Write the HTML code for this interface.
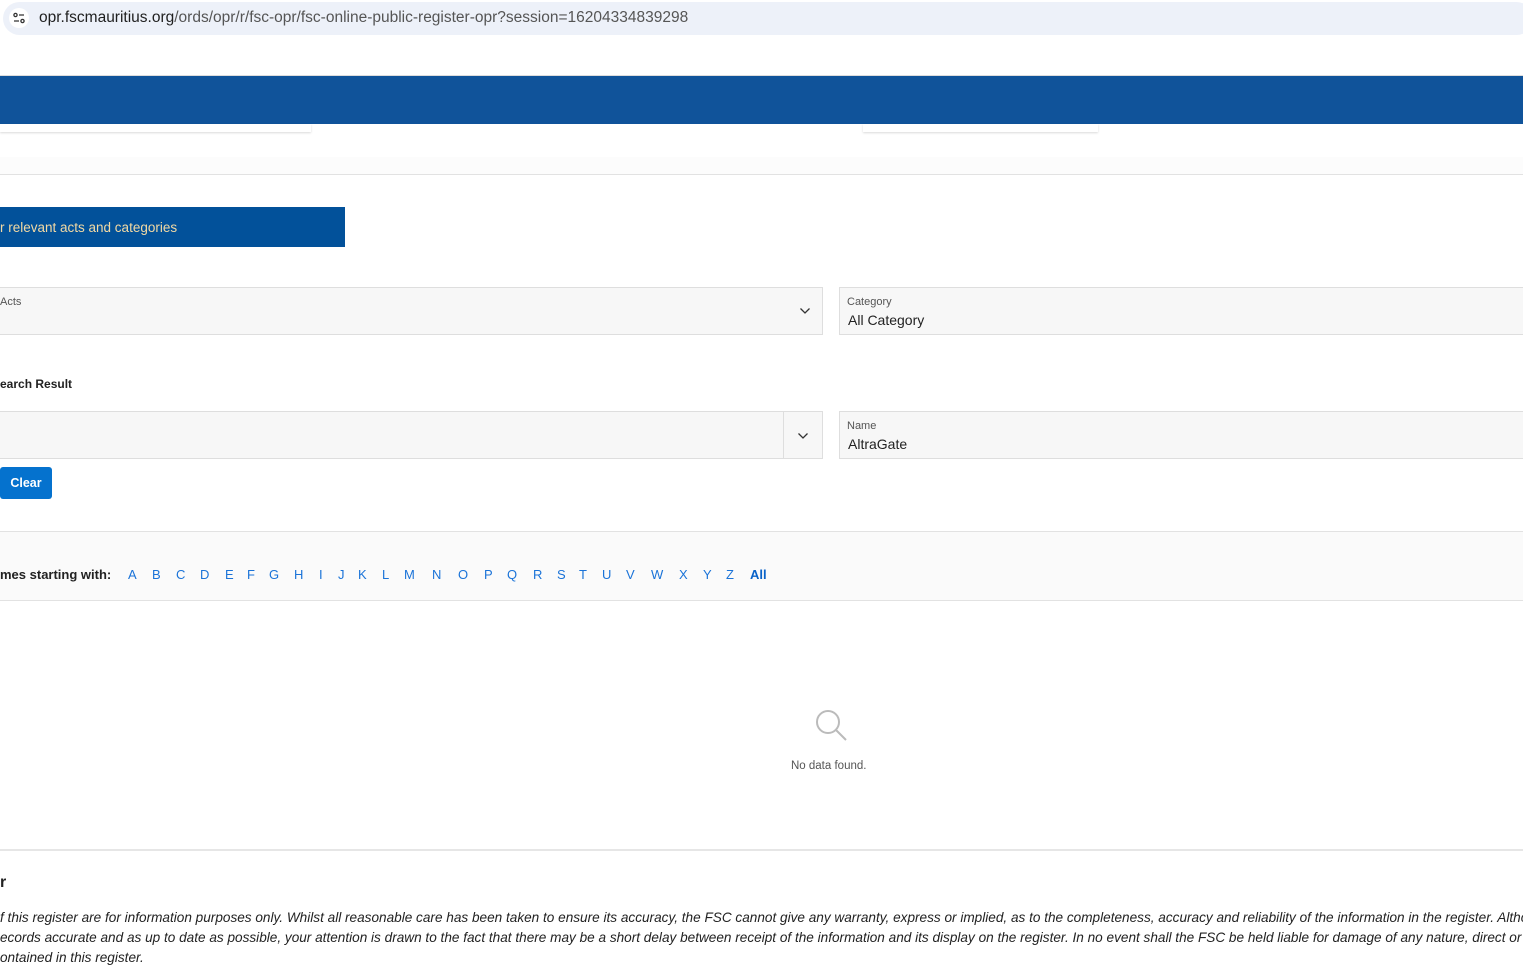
<!DOCTYPE html>
<html><head><style>
*{margin:0;padding:0;box-sizing:border-box}
body{width:1523px;height:970px;overflow:hidden;background:#fff;font-family:"Liberation Sans",sans-serif;position:relative;color:#222}
.a{position:absolute}
.url{left:3px;top:2px;width:1530px;height:33px;background:#edf1f9;border-radius:17px}
.lt{font-size:11px;color:#555}
.field{background:#f7f7f7;border:1px solid #dedede}
.let{font-size:13px;color:#1a73d8;top:567px}
</style></head><body>
<div class="a url"></div>
<div class="a" style="left:9px;top:8px;width:20px;height:20px;border-radius:50%;background:#fff"></div>
<svg class="a" style="left:12px;top:11px" width="14" height="14" viewBox="0 0 14 14" fill="none" stroke="#333" stroke-width="1.3"><circle cx="3.5" cy="4" r="1.6"/><path d="M7 4h5M2 10h5"/><circle cx="10.5" cy="10" r="1.6"/></svg>
<div class="a" style="left:39px;top:9px;font-size:15.5px;color:#1f1f1f">opr.fscmauritius.org<span style="color:#555">/ords/opr/r/fsc-opr/fsc-online-public-register-opr?session=16204334839298</span></div>
<div class="a" style="left:0;top:75px;width:1523px;height:1px;background:#ddd"></div>
<div class="a" style="left:0;top:76px;width:1523px;height:48px;background:#10539a"></div>
<div class="a" style="left:0;top:124px;width:311px;height:8px;background:#fff;box-shadow:0 1px 2px rgba(0,0,0,.15)"></div>
<div class="a" style="left:863px;top:124px;width:235px;height:8px;background:#fff;box-shadow:0 1px 2px rgba(0,0,0,.15)"></div>
<div class="a" style="left:0;top:157px;width:1523px;height:17px;background:#fcfcfc"></div>
<div class="a" style="left:0;top:174px;width:1523px;height:1px;background:#e2e2e2"></div>
<div class="a" style="left:0;top:207px;width:345px;height:40px;background:#02519a"></div>
<div class="a" style="left:0;top:220px;font-size:13.5px;color:#f2d9a4">r relevant acts and categories</div>
<div class="a field" style="left:-2px;top:287px;width:825px;height:48px"></div>
<div class="a lt" style="left:0;top:296px">Acts</div>
<svg class="a" style="left:799px;top:307px" width="12" height="8" viewBox="0 0 12 8" fill="none" stroke="#333" stroke-width="1.3"><path d="M1.5 1.5l4.5 4.5 4.5-4.5"/></svg>
<div class="a field" style="left:839px;top:287px;width:700px;height:48px"></div>
<div class="a lt" style="left:847px;top:296px">Category</div>
<div class="a" style="left:848px;top:312px;font-size:14px">All Category</div>
<div class="a" style="left:0;top:377px;font-size:12px;font-weight:bold">earch Result</div>
<div class="a field" style="left:-2px;top:411px;width:825px;height:48px"></div>
<div class="a" style="left:783px;top:412px;width:1px;height:46px;background:#dedede"></div>
<svg class="a" style="left:797px;top:432px" width="12" height="8" viewBox="0 0 12 8" fill="none" stroke="#333" stroke-width="1.3"><path d="M1.5 1.5l4.5 4.5 4.5-4.5"/></svg>
<div class="a field" style="left:839px;top:411px;width:700px;height:48px"></div>
<div class="a lt" style="left:847px;top:420px">Name</div>
<div class="a" style="left:848px;top:436px;font-size:14px">AltraGate</div>
<div class="a" style="left:0;top:467px;width:52px;height:32px;background:#0572ce;border-radius:3px;color:#fff;font-size:12.5px;font-weight:bold;text-align:center;line-height:33px">Clear</div>
<div class="a" style="left:0;top:531px;width:1523px;height:1px;background:#e2e2e2"></div>
<div class="a" style="left:0;top:532px;width:1523px;height:68px;background:#fafafa"></div>
<div class="a" style="left:0;top:600px;width:1523px;height:1px;background:#e2e2e2"></div>
<div class="a" style="left:0;top:567px;font-size:13px;font-weight:bold">mes starting with:</div>
<div class="a let" style="left:128px">A</div><div class="a let" style="left:152px">B</div><div class="a let" style="left:176px">C</div><div class="a let" style="left:200px">D</div><div class="a let" style="left:225px">E</div><div class="a let" style="left:247px">F</div><div class="a let" style="left:269px">G</div><div class="a let" style="left:294px">H</div><div class="a let" style="left:319px">I</div><div class="a let" style="left:338px">J</div><div class="a let" style="left:358px">K</div><div class="a let" style="left:382px">L</div><div class="a let" style="left:404px">M</div><div class="a let" style="left:432px">N</div><div class="a let" style="left:458px">O</div><div class="a let" style="left:484px">P</div><div class="a let" style="left:507px">Q</div><div class="a let" style="left:533px">R</div><div class="a let" style="left:557px">S</div><div class="a let" style="left:579px">T</div><div class="a let" style="left:602px">U</div><div class="a let" style="left:626px">V</div><div class="a let" style="left:651px">W</div><div class="a let" style="left:679px">X</div><div class="a let" style="left:703px">Y</div><div class="a let" style="left:726px">Z</div><div class="a let" style="left:750px;font-weight:bold;color:#0a63c9">All</div>
<svg class="a" style="left:813px;top:707px" width="36" height="36" viewBox="0 0 36 36" fill="none" stroke="#bbb" stroke-width="2"><circle cx="15" cy="15" r="11"/><path d="M23 23l10 10"/></svg>
<div class="a" style="left:791px;top:760px;font-size:11.5px;color:#555">No data found.</div>
<div class="a" style="left:0;top:849px;width:1523px;height:2px;background:#e6e6e6"></div>
<div class="a" style="left:0;top:874px;font-size:16px;font-weight:bold">r</div>
<div class="a" style="left:0;top:908px;font-size:13.6px;font-style:italic;line-height:20px;white-space:nowrap;color:#222">f this register are for information purposes only. Whilst all reasonable care has been taken to ensure its accuracy, the FSC cannot give any warranty, express or implied, as to the completeness, accuracy and reliability of the information in the register. Altho<br>ecords accurate and as up to date as possible, your attention is drawn to the fact that there may be a short delay between receipt of the information and its display on the register. In no event shall the FSC be held liable for damage of any nature, direct or<br>ontained in this register.</div>
</body></html>
